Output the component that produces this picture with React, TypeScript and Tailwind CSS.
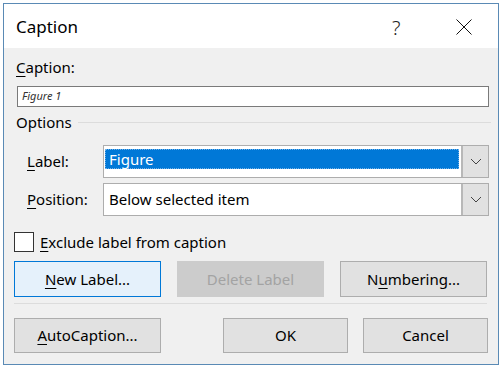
import React from "react";

const font = { fontFamily: '"Noto Sans", "Open Sans", sans-serif' };

function U({ children }: { children: React.ReactNode }) {
  return <span className="underline underline-offset-[3px] decoration-1">{children}</span>;
}

function Chevron() {
  return (
    <svg width="12" height="7" viewBox="0 0 12 7" fill="none">
      <path d="M1 1 L6 6 L11 1" stroke="#444" strokeWidth="1" />
    </svg>
  );
}

function Btn({ children, className = "" }: { children: React.ReactNode; className?: string }) {
  return (
    <div
      className={`flex items-center justify-center w-[147px] border text-[15px] text-black ${className}`}
    >
      {children}
    </div>
  );
}

export default function App() {
  return (
    <div className="w-[504px] h-[370px] bg-white pt-[3px] pl-[3px]" style={font}>
      <div className="w-[496px] h-[362px] border border-[#5a8ab5] bg-[#f0f0f0] flex flex-col">
        {/* Title bar */}
        <div className="h-[44px] bg-white flex items-center pl-[12px] relative">
          <span className="text-[17px] text-black leading-none">Caption</span>
          <span className="absolute left-[388px] top-[14px] text-[20px] text-[#222] leading-none font-light">?</span>
          <svg className="absolute left-[452px] top-[15px]" width="16" height="16" viewBox="0 0 16 16">
            <path d="M0.5 0.5 L15.5 15.5 M15.5 0.5 L0.5 15.5" stroke="#111" strokeWidth="1" />
          </svg>
        </div>

        {/* Caption */}
        <div className="h-[38px] pl-[12px] pt-[9px] text-[15px] leading-[20px] text-black">
          <U>C</U>aption:
        </div>
        <div className="ml-[13px] w-[472px] h-[21px] border border-[#7a7a7a] bg-white flex items-center pl-[4px]">
          <span className="text-[11px] italic text-[#333]">Figure 1</span>
        </div>

        {/* Options */}
        <div className="mt-[5px] h-[33px] pl-[12px] flex items-start">
          <span className="text-[15px] leading-[20px] text-black">Options</span>
          <div className="flex-1 mr-[7px] ml-[6px] mt-[10px] h-px bg-[#dcdcdc]" />
        </div>

        {/* Label */}
        <div className="flex items-center h-[33px] pl-[23px]">
          <span className="w-[76px] text-[15px] text-black"><U>L</U>abel:</span>
          <div className="w-[386px] h-[33px] border border-[#adadad] bg-white flex">
            <div className="flex-1 pt-[3px] pl-[1px] pr-[2px]">
              <div className="h-[20px] bg-[#0078d7] border border-dotted border-[#6fb0e8] flex items-center pl-[3px] text-[15px] text-white leading-none">
                Figure
              </div>
            </div>
            <div className="w-[27px] bg-[#e1e1e1] border-l-2 border-[#b8b8b8] flex items-center justify-center">
              <Chevron />
            </div>
          </div>
        </div>

        {/* Position */}
        <div className="flex items-center h-[33px] pl-[23px] mt-[5px]">
          <span className="w-[76px] text-[15px] text-black"><U>P</U>osition:</span>
          <div className="w-[386px] h-[33px] border border-[#adadad] bg-white flex">
            <div className="flex-1 flex items-center pl-[5px] text-[15px] text-black">Below selected item</div>
            <div className="w-[27px] bg-[#e1e1e1] border-l-2 border-[#b8b8b8] flex items-center justify-center">
              <Chevron />
            </div>
          </div>
        </div>

        {/* Checkbox */}
        <div className="flex items-center mt-[16px] pl-[10px] h-[20px]">
          <div className="w-[20px] h-[20px] border border-[#333] bg-white" />
          <span className="ml-[6px] text-[15px] text-black leading-[20px]">
            <U>E</U>xclude label from caption
          </span>
        </div>

        {/* Buttons row 1 */}
        <div className="flex mt-[9px] pl-[10px] h-[36px] gap-[16px]">
          <Btn className="bg-[#e5f1fb] border-[#0078d7]">
            <U>N</U>ew Label...
          </Btn>
          <Btn className="bg-[#cccccc] border-[#cccccc] !text-[#a3a3a3]">Delete Label</Btn>
          <Btn className="bg-[#e1e1e1] border-[#adadad]">
            N<U>u</U>mbering...
          </Btn>
        </div>

        <div className="mt-[6px] ml-[10px] w-[473px] h-px bg-[#dcdcdc]" />

        {/* Buttons row 2 */}
        <div className="flex mt-[14px] pl-[10px] h-[35px]">
          <Btn className="bg-[#e1e1e1] border-[#adadad]">
            <U>A</U>utoCaption...
          </Btn>
          <Btn className="bg-[#e1e1e1] border-[#adadad] ml-[62px] !w-[125px]">OK</Btn>
          <Btn className="bg-[#e1e1e1] border-[#adadad] ml-[15px] !w-[125px]">Cancel</Btn>
        </div>
      </div>
    </div>
  );
}
